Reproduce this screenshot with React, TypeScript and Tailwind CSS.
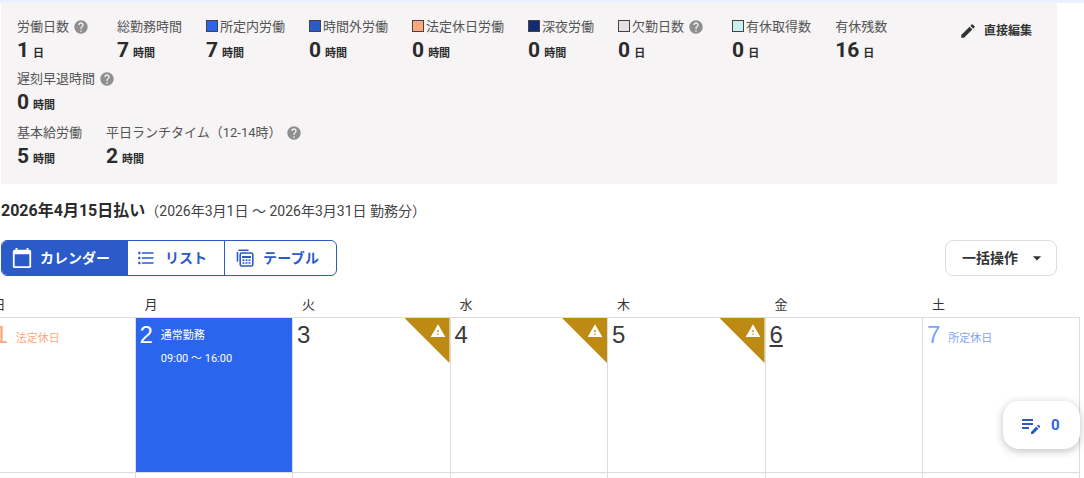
import React from "react";
import { MdHelp, MdEdit, MdCalendarToday, MdFormatListBulleted, MdArrowDropDown, MdEditNote, MdWarning } from "react-icons/md";

const Help = () => <MdHelp className="text-[#8f8f8f] ml-[4px] shrink-0" size={16} />;

function Stat({ label, value, unit, color, help }: { label: string; value: string; unit: string; color?: string; help?: boolean }) {
  return (
    <div className="flex flex-col">
      <div className="flex items-center h-[20px] text-[13px] leading-[20px] text-[#555]">
        {color && <span className={`w-[12px] h-[12px] mr-[2px] mb-[2px] border border-[#444] ${color}`} />}
        <span>{label}</span>
        {help && <Help />}
      </div>
      <div className="flex items-baseline h-[29px] pt-[1px] text-[#2b2b2b] font-bold">
        <span className="text-[21px] leading-[25px]">{value}</span>
        <span className="text-[11px] ml-[4px]">{unit}</span>
      </div>
    </div>
  );
}

function TableIcon() {
  return (
    <svg width="18" height="18" viewBox="0 0 18 18" fill="none">
      <path d="M1.5 3.5v8.5M3 1.2h9" stroke="#2a5bc8" strokeWidth="1.6" strokeLinecap="round" />
      <rect x="4.2" y="4" width="12.6" height="13" rx="1.6" stroke="#2a5bc8" strokeWidth="1.6" />
      <rect x="6" y="7" width="9" height="2" fill="#2a5bc8" />
      <path d="M6.5 10.5h2v1.6h-2zM9.5 10.5h2v1.6h-2zM12.5 10.5h2v1.6h-2zM6.5 13.2h2v1.6h-2zM9.5 13.2h2v1.6h-2zM12.5 13.2h2v1.6h-2z" fill="#2a5bc8" />
    </svg>
  );
}

function Warn() {
  return (
    <div className="absolute top-0 right-0 w-[45px] h-[45px] bg-[#bd8b13] [clip-path:polygon(0_0,100%_0,100%_100%)]">
      <MdWarning className="absolute top-[5px] right-[4px] text-white" size={16} />
    </div>
  );
}

function Day({ n, warn, first, last, tone, note, time, under }: { n?: string; warn?: boolean; first?: boolean; last?: boolean; tone?: "red" | "blue" | "on"; note?: string; time?: string; under?: boolean }) {
  const bg = tone === "on" ? "bg-[#2b65ee]" : "bg-white";
  const numc = tone === "red" ? "text-[#ffa77c]" : tone === "blue" ? "text-[#80a5f7]" : tone === "on" ? "text-white" : "text-[#3a3a3a]";
  const notec = tone === "red" ? "text-[#ffa77c]" : tone === "blue" ? "text-[#80a5f7]" : "text-white";
  return (
    <div className={`relative h-full ${first ? "pl-[5px]" : "pl-[4px]"} ${bg} ${first ? "" : "border-l border-[#ddd]"} ${last ? "border-r border-[#ddd]" : ""}`}>
      {n && (
        <div className="flex items-start">
          <span className={`text-[24px] leading-[34px] font-['Liberation_Sans'] ${numc} ${under ? "underline underline-offset-2" : ""}`}>{n}</span>
          {note && (
            <div className={`ml-[8px] text-[11px] ${notec}`}>
              <div className={tone === "on" ? "mt-[10px] leading-[16px]" : "mt-[13px] leading-[16px]"}>{note}</div>
              {time && <div className="mt-[7px] leading-[16px]">{time}</div>}
            </div>
          )}
        </div>
      )}
      {warn && <Warn />}
    </div>
  );
}

const cols = "grid grid-cols-[145px_repeat(6,157.5px)] w-[1090px] -ml-[10.5px]";

export default function App() {
  return (
    <div className="relative w-[1084px] h-[478px] overflow-hidden bg-white text-[#333]" style={{ fontFamily: 'Roboto, "Noto Sans CJK JP", sans-serif' }}>
      <div className="h-[3px] bg-[#eaf2fd]" />
      <div className="ml-[1px] w-[1056px] h-[181px] bg-[#f6f4f5] pl-[16px] pt-[14px] flex">
        <div className="w-[900px]">
          <div className="flex flex-wrap gap-x-6 gap-y-[3px]">
            <div className="mr-[4px]"><Stat label="労働日数" value="1" unit="日" help /></div>
            <Stat label="総勤務時間" value="7" unit="時間" />
            <Stat label="所定内労働" value="7" unit="時間" color="bg-[#2b65ee]" />
            <Stat label="時間外労働" value="0" unit="時間" color="bg-[#2a5bc8]" />
            <Stat label="法定休日労働" value="0" unit="時間" color="bg-[#ffa77c]" />
            <Stat label="深夜労働" value="0" unit="時間" color="bg-[#122c74]" />
            <div className="mr-[4px]"><Stat label="欠勤日数" value="0" unit="日" color="bg-[#e2e0e0]" help /></div>
            <Stat label="有休取得数" value="0" unit="日" color="bg-[#c9f0ef]" />
            <Stat label="有休残数" value="16" unit="日" />
            <Stat label="遅刻早退時間" value="0" unit="時間" help />
          </div>
          <div className="flex gap-x-6 mt-[5px]">
            <Stat label="基本給労働" value="5" unit="時間" />
            <Stat label="平日ランチタイム（12-14時）" value="2" unit="時間" help />
          </div>
        </div>
        <div className="ml-[42px] mt-[4px] flex items-center h-[20px] gap-[7px] text-[12px] font-bold text-[#333]">
          <MdEdit size={18} className="text-[#333]" />
          <span>直接編集</span>
        </div>
      </div>

      <div className="ml-[1px] mt-[17px] h-[20px] flex items-center text-[#2b2b2b]">
        <span className="text-[16px] font-bold">2026年4月15日払い</span>
        <span className="text-[14px] text-[#444]">（2026年3月1日 〜 2026年3月31日 勤務分）</span>
      </div>

      <div className="ml-[1px] w-[1056px] mt-[19px] flex justify-between">
        <div className="flex h-[36px] w-[336px] rounded-md border border-[#2a5bc8] overflow-hidden text-[14px] font-bold text-[#2a5bc8]">
          <div className="w-[126px] bg-[#2a5bc8] text-white flex items-center pl-[9px] gap-[7px]">
            <MdCalendarToday size={22} />
            <span>カレンダー</span>
          </div>
          <div className="w-[97px] border-r border-[#2a5bc8] flex items-center pl-[8px] gap-[9px]">
            <MdFormatListBulleted size={20} />
            <span>リスト</span>
          </div>
          <div className="flex-1 flex items-center pl-[11px] gap-[9px]">
            <TableIcon />
            <span className="tracking-[0.3px]">テーブル</span>
          </div>
        </div>
        <div className="w-[112px] h-[36px] rounded-lg border border-[#ddd] bg-white flex items-center pl-[16px] text-[14px] font-bold text-[#333]">
          <span>一括操作</span>
          <MdArrowDropDown size={20} className="ml-[9px] text-[#333]" />
        </div>
      </div>

      <div className={`${cols} mt-[20px] h-[21px] text-[13px] leading-[17px] text-[#333]`}>
        {["日", "月", "火", "水", "木", "金", "土"].map((d, i) => (
          <div key={d} className={i === 0 ? "pl-[3px]" : "pl-[10px]"}>{d}</div>
        ))}
      </div>
      <div className={`${cols} h-[154px] border-y border-[#ddd] box-content`}>
        <Day first n="1" tone="red" note="法定休日" />
        <Day n="2" tone="on" note="通常勤務" time="09:00 〜 16:00" />
        <Day n="3" warn />
        <Day n="4" warn />
        <Day n="5" warn />
        <Day n="6" under />
        <Day n="7" tone="blue" note="所定休日" last />
      </div>
      <div className={`${cols} h-[10px]`}>
        <Day first /><Day /><Day /><Day /><Day /><Day /><Day last />
      </div>

      <div className="absolute left-[1003px] top-[401px] w-[77px] h-[48px] rounded-2xl bg-white shadow-[0_2px_8px_rgba(0,0,0,0.25)] flex items-center pl-[16px] text-[#2b65ee]">
        <MdEditNote size={24} className="text-[#2a5bc8]" />
        <span className="ml-[8px] text-[15px] font-bold">0</span>
      </div>
    </div>
  );
}
